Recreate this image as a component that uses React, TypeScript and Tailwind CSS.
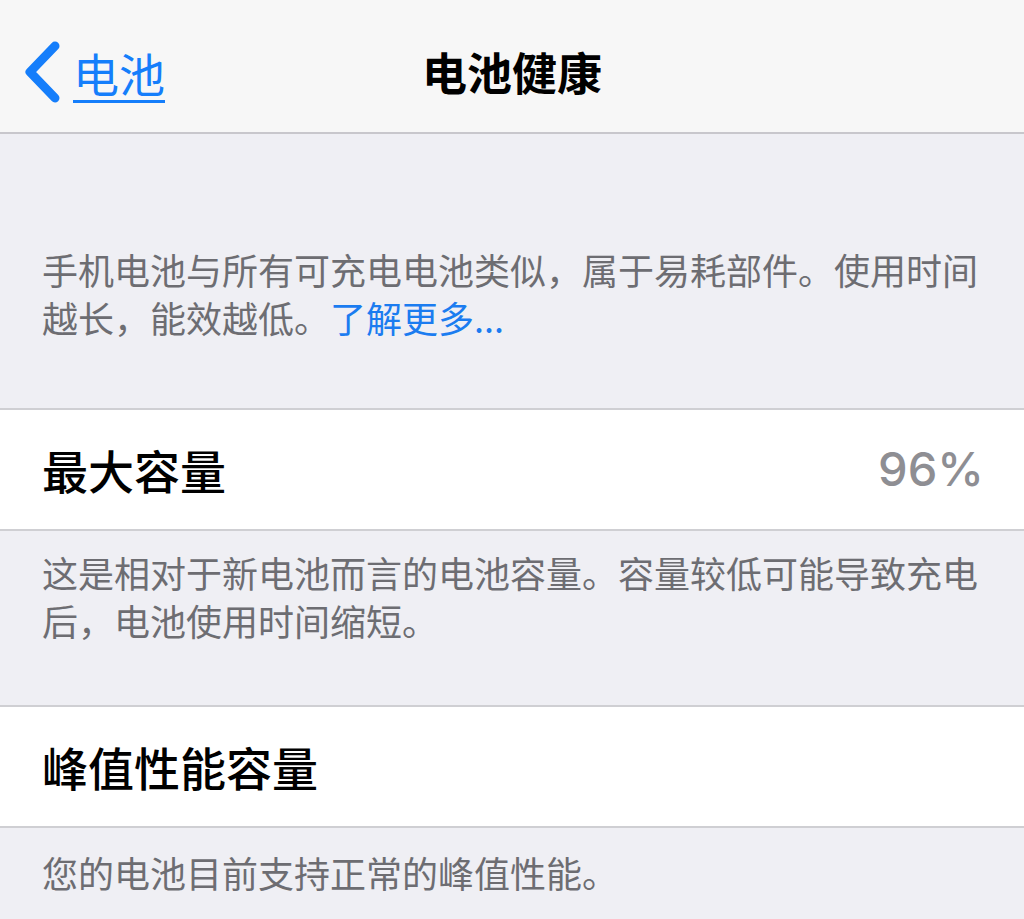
const cjk = { fontFamily: '"Noto Sans CJK SC", "Noto Sans", sans-serif' };

function BackChevron() {
  return (
    <svg width="40" height="62" viewBox="0 0 40 62" className="shrink-0">
      <polyline
        points="33,5 8,31 33,57"
        fill="none"
        stroke="#157efb"
        strokeWidth="9"
        strokeLinecap="round"
        strokeLinejoin="round"
      />
    </svg>
  );
}

function Footer({ lines, className }: { lines: React.ReactNode[]; className: string }) {
  return (
    <div className={`bg-[#efeff4] px-[42px] ${className}`}>
      {lines.map((l, i) => (
        <div key={i} className="whitespace-nowrap text-[36px] leading-[48px] text-[#6d6d72]">
          {l}
        </div>
      ))}
    </div>
  );
}

function Cell({ label, value }: { label: string; value?: string }) {
  return (
    <div className="flex h-[123px] items-center justify-between border-y-2 border-[#cfcfd3] bg-white pl-[42px] pr-[40px]">
      <span className="text-[46px] font-medium text-black">{label}</span>
      {value && (
        <span
          className="text-[47px] font-medium text-[#8e8e93]"
          style={{ fontFamily: 'Inter, "Liberation Sans", sans-serif' }}
        >
          {value}
        </span>
      )}
    </div>
  );
}

export default function App() {
  return (
    <div className="h-[919px] w-[1024px] overflow-hidden bg-[#efeff4]" style={cjk}>
      {/* 导航栏 */}
      <div className="relative flex h-[134px] items-center border-b-2 border-[#c8c7cc] bg-[#f7f7f7] pt-[12px]">
        <div className="flex items-center pl-[22px]">
          <BackChevron />
          <span className="ml-[11px] text-[46px] leading-none text-[#157efb] underline decoration-[3px] underline-offset-[8px]">
            电池
          </span>
        </div>
        <div className="absolute inset-x-0 top-[12px] bottom-0 flex items-center justify-center">
          <span className="text-[45px] font-bold text-black">电池健康</span>
        </div>
      </div>

      <Footer
        className="h-[274px] pt-[111px]"
        lines={[
          "手机电池与所有可充电电池类似，属于易耗部件。使用时间",
          <>
            越长，能效越低。<span className="text-[#1b7cf0]">了解更多...</span>
          </>,
        ]}
      />

      <Cell label="最大容量" value="96%" />

      <Footer
        className="h-[174px] pt-[17px]"
        lines={[
          "这是相对于新电池而言的电池容量。容量较低可能导致充电",
          "后，电池使用时间缩短。",
        ]}
      />

      <Cell label="峰值性能容量" />

      <Footer className="pt-[20px]" lines={["您的电池目前支持正常的峰值性能。"]} />
    </div>
  );
}
